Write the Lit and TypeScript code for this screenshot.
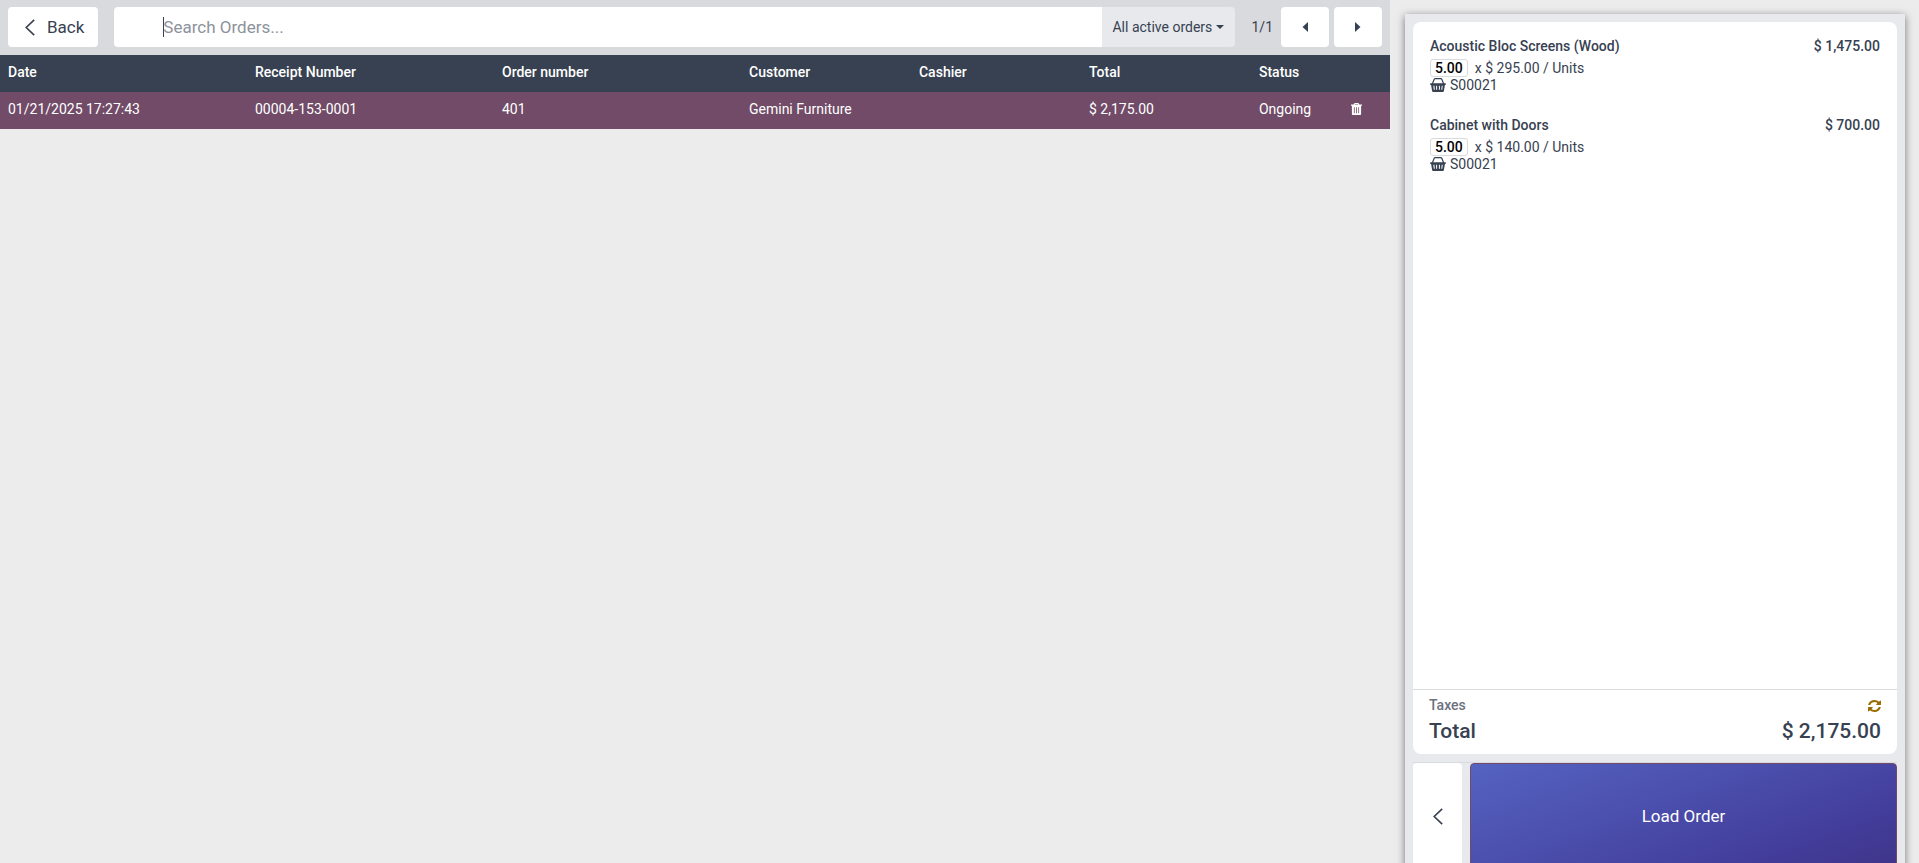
import { LitElement, html, css, svg } from "lit";
import { customElement, state } from "lit/decorators.js";

interface Order {
  date: string;
  receipt: string;
  number: string;
  customer: string;
  cashier: string;
  total: string;
  status: string;
}

interface OrderLine {
  name: string;
  qty: string;
  unitPrice: string;
  price: string;
  source: string;
}

const chevronLeft = html`<svg class="chevron" width="10" height="17" viewBox="0 0 10 17" aria-hidden="true">
  <path d="M9.2 0.9 1.2 8.5 9.2 16.1" fill="none" stroke="currentColor" stroke-width="1.6" />
</svg>`;

const triangle = (points: string) => html`<svg width="6" height="10" viewBox="0 0 6 10" aria-hidden="true">
  ${svg`<polygon points=${points} fill="currentColor" />`}
</svg>`;

const trash = html`<svg width="11" height="12" viewBox="0 0 11 12" aria-hidden="true">
  <path fill="currentColor" fill-rule="evenodd"
    d="M3.6 0h3.8l.9 1.5H11v1.3h-.9v8.1c0 .6-.5 1.1-1.100 1.100H2c-.6 0-1.100-.5-1.100-1.100V2.800H0V1.500h2.700zM4.100.9l-.4.600h3.600l-.4-.600zM2.900 4.200v6h.8v-6zM5.100 4.200v6h.8v-6zM7.300 4.200v6h.8v-6z" />
</svg>`;

const basket = html`<svg width="16" height="14" viewBox="0 0 16 14" aria-hidden="true">
  <path d="M2.300 6 4.200 1.300Q4.500.700 5.200.700h5.600q.7 0 1 .6l1.900 4.700" fill="none" stroke="currentColor" stroke-width="1.200" />
  <path fill="currentColor" fill-rule="evenodd"
    d="M.8 5.200h14.400c.5 0 .8.400.8.800s-.3.900-.8.900h-.3l-1 6c-.1.600-.5 1-1.100 1H3.200c-.6 0-1-.4-1.100-1l-1-6H.8C.3 6.900 0 6.500 0 6s.3-.8.800-.8zM3.300 7.800l.5 4h1l-.4-4zM6.100 7.800v4h1v-4zM8.900 7.800v4h1v-4zM11.700 7.800l-.4 4h1l.4-4z" />
</svg>`;

const refresh = html`<svg width="13" height="12" viewBox="0 0 1536 1536" preserveAspectRatio="none" aria-hidden="true">
  <path fill="currentColor"
    d="M1511 928q0 5-1 7-64 268-268 434.500T764 1536q-146 0-282.500-55T238 1324l-129 129q-19 19-45 19t-45-19-19-45V960q0-26 19-45t45-19h448q26 0 45 19t19 45-19 45l-137 137q71 66 161 102t187 36q134 0 250-65t186-179q11-17 53-117 8-23 30-23h192q13 0 22.500 9.500t9.500 22.500zm25-800v448q0 26-19 45t-45 19h-448q-26 0-45-19t-19-45 19-45l138-138Q969 256 768 256q-134 0-250 65T332 500q-11 17-53 117-8 23-30 23H50q-13 0-22.500-9.500T18 608v-7q65-268 270-434.500T768 0q146 0 284 55.500T1297 212l130-129q19-19 45-19t45 19 19 45z" />
</svg>`;

@customElement("order-line")
class OrderLineElement extends LitElement {
  static properties = { line: { attribute: false } };
  declare line: OrderLine;

  static styles = css`
    :host {
      display: block;
    }
    .name-row {
      display: flex;
      justify-content: space-between;
      gap: 16px;
      font-weight: 500;
      line-height: 22px;
    }
    .price {
      white-space: nowrap;
    }
    .qty-row {
      display: flex;
      align-items: center;
      gap: 7px;
      height: 21px;
      line-height: 20px;
    }
    .qty {
      box-sizing: border-box;
      padding: 0 4px;
      border: 1px solid #d8dadd;
      border-radius: 3px;
      color: #000;
      font-weight: 500;
      line-height: 16px;
    }
    .source {
      display: flex;
      align-items: center;
      gap: 4px;
      line-height: 14px;
    }
  `;

  render() {
    const { name, qty, unitPrice, price, source } = this.line;
    return html`
      <div class="name-row"><span>${name}</span><span class="price">${price}</span></div>
      <div class="qty-row"><span class="qty">${qty}</span><span>x ${unitPrice} / Units</span></div>
      <div class="source">${basket}<span>${source}</span></div>
    `;
  }
}

@customElement("app-root")
class AppRoot extends LitElement {
  @state() private orders: Order[] = [
    {
      date: "01/21/2025 17:27:43",
      receipt: "00004-153-0001",
      number: "401",
      customer: "Gemini Furniture",
      cashier: "",
      total: "$ 2,175.00",
      status: "Ongoing",
    },
  ];

  @state() private lines: OrderLine[] = [
    { name: "Acoustic Bloc Screens (Wood)", qty: "5.00", unitPrice: "$ 295.00", price: "$ 1,475.00", source: "S00021" },
    { name: "Cabinet with Doors", qty: "5.00", unitPrice: "$ 140.00", price: "$ 700.00", source: "S00021" },
  ];

  static styles = css`
    :host {
      display: grid;
      grid-template-columns: minmax(0, 1fr) 529px;
      height: 100vh;
      overflow: hidden;
      background: #ececec;
      color: #374151;
      font: 14px/21px Roboto, "Liberation Sans", sans-serif;
    }
    button,
    input,
    select {
      margin: 0;
      border: 0;
      font: inherit;
      color: inherit;
    }
    button {
      display: flex;
      align-items: center;
      justify-content: center;
      padding: 0;
      background: #fff;
      border-radius: 4px;
      cursor: pointer;
    }
    .topbar {
      display: flex;
      align-items: center;
      box-sizing: border-box;
      height: 55px;
      padding: 7px 8px 8px;
      background: #d8dadd;
    }
    .back {
      height: 40px;
      gap: 12px;
      padding: 0 14px 0 17px;
      margin-right: 16px;
      font-size: 17px;
    }
    .search {
      flex: 1;
      min-width: 0;
      box-sizing: border-box;
      height: 40px;
      padding: 0 16px 0 49px;
      border-radius: 4px 0 0 4px;
      background: #fff;
      font-size: 17px;
      outline: none;
    }
    .search:placeholder-shown {
      background: linear-gradient(#374151, #374151) 49px 10px / 1px 20px no-repeat #fff;
    }
    .search::placeholder {
      color: #8d929b;
      opacity: 1;
    }
    .filter {
      display: grid;
      align-items: center;
      height: 40px;
      background: #e7e9ed;
      border-radius: 0 4px 4px 0;
    }
    .filter > * {
      grid-area: 1 / 1;
    }
    .filter select {
      height: 40px;
      padding: 0 23px 0 10px;
      appearance: none;
      background: none;
    }
    .filter svg {
      justify-self: end;
      margin-right: 11px;
      pointer-events: none;
    }
    .page {
      margin: 0 8px 0 16px;
    }
    .pager {
      display: flex;
      gap: 5px;
    }
    .pager button {
      width: 48px;
      height: 40px;
    }
    table {
      width: 100%;
      border-collapse: collapse;
      table-layout: fixed;
      color: #fff;
    }
    .wide {
      width: 17.77%;
    }
    .medium {
      width: 12.23%;
    }
    .status {
      width: 5.2%;
    }
    th,
    td {
      padding: 7px 8px 9px;
      text-align: left;
      vertical-align: top;
      white-space: nowrap;
    }
    thead tr {
      background: #374151;
    }
    th {
      font-weight: 500;
    }
    tbody tr {
      background: #714b67;
    }
    .delete {
      width: 24px;
      height: 20px;
      margin: 0 auto;
      background: none;
      color: #fff;
    }
    .panel {
      display: flex;
      flex-direction: column;
      box-sizing: border-box;
      height: 100vh;
      margin: 14px 14px 0 15px;
      padding: 8px;
      background: #e7e9ed;
      box-shadow: 0 2px 8px rgba(0, 0, 0, 0.5);
    }
    .receipt {
      display: flex;
      flex: 1;
      flex-direction: column;
      min-height: 0;
      background: #fff;
      border-radius: 8px;
    }
    .lines {
      display: flex;
      flex: 1;
      flex-direction: column;
      gap: 22px;
      padding: 13px 17px;
    }
    .summary {
      padding: 5px 16px 7px;
      border-top: 1px solid #d8dadd;
    }
    .summary div {
      display: flex;
      align-items: center;
      justify-content: space-between;
    }
    .taxes {
      color: #6b7280;
      font-weight: 500;
    }
    .taxes svg {
      color: #9a6b01;
    }
    .total {
      font-size: 21px;
      font-weight: 500;
      line-height: 31px;
    }
    .actions {
      display: flex;
      gap: 8px;
      height: 106px;
      margin-top: 8px;
      border-top: 1px solid #d8dadd;
    }
    .actions .previous {
      width: 49px;
    }
    .actions .load {
      flex: 1;
      border: 1px solid #714b67;
      background: linear-gradient(160deg, #5563c1, #433e9c 75%, #3f3489);
      color: #fff;
      font-size: 17px;
    }
  `;

  private renderOrders() {
    return html`
      <table>
        <colgroup>
          <col class="wide" /><col class="wide" /><col class="wide" />
          <col class="medium" /><col class="medium" /><col class="medium" />
          <col class="status" /><col />
        </colgroup>
        <thead>
          <tr>
            <th>Date</th><th>Receipt Number</th><th>Order number</th><th>Customer</th>
            <th>Cashier</th><th>Total</th><th>Status</th><th></th>
          </tr>
        </thead>
        <tbody>
          ${this.orders.map(
            (o) => html`<tr>
              <td>${o.date}</td><td>${o.receipt}</td><td>${o.number}</td><td>${o.customer}</td>
              <td>${o.cashier}</td><td>${o.total}</td><td>${o.status}</td>
              <td><button class="delete" aria-label="Delete order">${trash}</button></td>
            </tr>`
          )}
        </tbody>
      </table>
    `;
  }

  render() {
    return html`
      <main>
        <div class="topbar">
          <button class="back">${chevronLeft}<span>Back</span></button>
          <input class="search" type="text" placeholder="Search Orders..." aria-label="Search Orders" />
          <label class="filter">
            <select aria-label="Order filter"><option>All active orders</option></select>
            <svg width="8" height="4" viewBox="0 0 8 4" aria-hidden="true"><polygon points="0,0 8,0 4,4" fill="currentColor" /></svg>
          </label>
          <span class="page">1/1</span>
          <div class="pager">
            <button aria-label="Previous page">${triangle("6,0 6,10 0.5,5")}</button>
            <button aria-label="Next page">${triangle("0,0 0,10 5.5,5")}</button>
          </div>
        </div>
        ${this.renderOrders()}
      </main>
      <aside class="panel">
        <section class="receipt">
          <div class="lines">${this.lines.map((line) => html`<order-line .line=${line}></order-line>`)}</div>
          <div class="summary">
            <div class="taxes"><span>Taxes</span>${refresh}</div>
            <div class="total"><span>Total</span><span>$ 2,175.00</span></div>
          </div>
        </section>
        <div class="actions">
          <button class="previous" aria-label="Go back">${chevronLeft}</button>
          <button class="load">Load Order</button>
        </div>
      </aside>
    `;
  }
}
